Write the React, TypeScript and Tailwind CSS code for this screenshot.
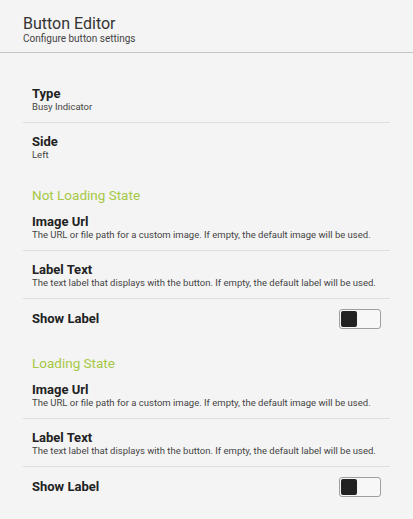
import React, { useState } from 'react';

type Field = { title: string; desc: string };

const urlField: Field = {
  title: 'Image Url',
  desc: 'The URL or file path for a custom image. If empty, the default image will be used.',
};
const labelField: Field = {
  title: 'Label Text',
  desc: 'The text label that displays with the button. If empty, the default label will be used.',
};

const Item = ({ title, desc }: Field) => (
  <div className="border-b border-[#dedede] pt-[11px] pb-[9px] pl-[9px]">
    <div className="text-[13px] leading-[15px] font-bold text-[#222]">{title}</div>
    <div className="text-[9.5px] leading-[12px] text-[#444]">{desc}</div>
  </div>
);

const Toggle = () => {
  const [on, setOn] = useState(false);
  return (
    <button
      onClick={() => setOn(!on)}
      className={`flex h-[20px] w-[42px] items-center rounded-[3px] border border-[#9e9e9e] bg-[#f7f7f7] p-[1px] ${
        on ? 'justify-end' : 'justify-start'
      }`}
    >
      <span className="block h-[16px] w-[16px] rounded-[2px] bg-[#222]" />
    </button>
  );
};

const Section = ({ heading, top }: { heading: string; top: string }) => (
  <div>
    <div className={`${top} pl-[9px] text-[13.5px] leading-[16px] text-[#a6c845]`}>{heading}</div>
    <Item {...urlField} />
    <Item {...labelField} />
    <div className="flex items-center justify-between pt-[10px] pb-[10px] pl-[9px] pr-[9px]">
      <span className="text-[13px] leading-[20px] font-bold text-[#222]">Show Label</span>
      <Toggle />
    </div>
  </div>
);

const App = () => {
  return (
    <div className="min-h-[519px] bg-[#f4f4f4]" style={{ fontFamily: 'Roboto, "Liberation Sans", sans-serif' }}>
      <div className="border-b border-[#c4c4c4] px-[23px] pt-[14px] pb-[7px]">
        <div className="text-[16px] leading-[19px] text-[#333]">Button Editor</div>
        <div className="text-[10px] leading-[12px] text-[#444]">Configure button settings</div>
      </div>
      <div className="px-[23px] pt-[22px]">
        <Item title="Type" desc="Busy Indicator" />
        <div className="pt-[11px] pb-[9px] pl-[9px]">
          <div className="text-[13px] leading-[15px] font-bold text-[#222]">Side</div>
          <div className="text-[9.5px] leading-[12px] text-[#444]">Left</div>
        </div>
        <Section heading="Not Loading State" top="mt-[17px]" />
        <Section heading="Loading State" top="mt-[16px]" />
      </div>
    </div>
  );
};

export default App;
